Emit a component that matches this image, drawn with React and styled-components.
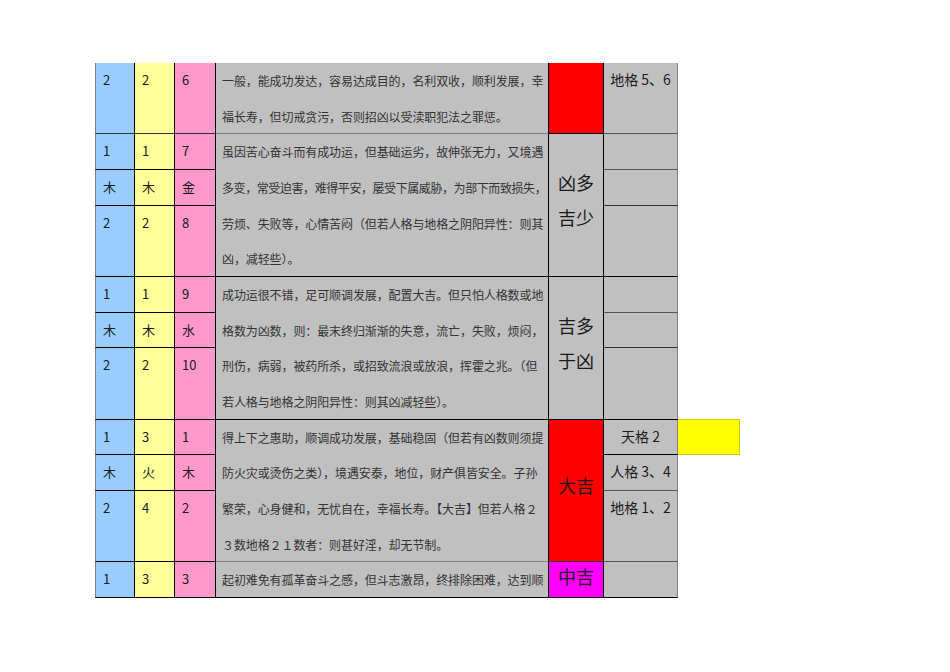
import styled, { createGlobalStyle } from "styled-components";

const GlobalStyle = createGlobalStyle`
  html, body {
    margin: 0;
    padding: 0;
    background: #fff;
  }
  body {
    font-family: "Noto Sans CJK SC", "Noto Sans", sans-serif;
  }
`;

const Page = styled.div`
  width: 950px;
  height: 672px;
  padding: 63px 0 0 95px;
  box-sizing: border-box;
`;

const Sheet = styled.div`
  display: grid;
  grid-template-columns: 40px 40px 41px 333px 55px 74px 62px;
  grid-template-rows: repeat(15, 35.67px);
`;

const Cell = styled.div`
  grid-column: ${(p) => p.$col};
  grid-row: ${(p) => p.$row} / span ${(p) => p.$span || 1};
  box-sizing: border-box;
  background: ${(p) => p.$bg || "#c0c0c0"};
  border-right: 1px solid ${(p) => p.$br || "#000"};
  border-bottom: 1px solid ${(p) => p.$bb || "#000"};
  border-left: ${(p) => (p.$first ? "1px solid #808080" : "none")};
  overflow: hidden;
`;

const Num = styled(Cell)`
  padding-left: 7px;
  font-size: 13px;
  line-height: 34px;
  color: #1a1a1a;
`;

const Desc = styled(Cell)`
  padding-left: 6px;
  font-size: 12px;
  line-height: 35.67px;
  color: #333;
  white-space: nowrap;
`;

const Line = styled.div`
  height: 35.67px;
  letter-spacing: ${(p) => (p.$tight ? "-0.42px" : "-0.1px")};
`;

const Verdict = styled(Cell)`
  display: flex;
  flex-direction: column;
  align-items: center;
  justify-content: ${(p) => (p.$top ? "flex-start" : "center")};
  padding-bottom: ${(p) => (p.$top ? "0" : "10px")};
  font-size: 18px;
  line-height: ${(p) => (p.$top ? "28px" : "35px")};
  color: #1a1a1a;
`;

const Label = styled(Cell)`
  text-align: center;
  font-size: 14px;
  line-height: 33px;
  color: #1a1a1a;
`;

const Marker = styled.div`
  grid-column: 7;
  grid-row: 11;
  box-sizing: border-box;
  background: #ffff00;
  border: 1px solid #cccc00;
  border-left: none;
  margin-top: -1px;
`;

const BLUE = "#99ccff";
const YELLOW = "#ffff99";
const PINK = "#ff99cc";

const numRows = [
  { row: 1, span: 2, vals: ["2", "2", "6"], bb: "#333" },
  { row: 3, vals: ["1", "1", "7"] },
  { row: 4, vals: ["木", "木", "金"] },
  { row: 5, span: 2, vals: ["2", "2", "8"] },
  { row: 7, vals: ["1", "1", "9"] },
  { row: 8, vals: ["木", "木", "水"] },
  { row: 9, span: 2, vals: ["2", "2", "10"] },
  { row: 11, vals: ["1", "3", "1"] },
  { row: 12, vals: ["木", "火", "木"] },
  { row: 13, span: 2, vals: ["2", "4", "2"] },
  { row: 15, vals: ["1", "3", "3"] },
];

const blocks = [
  {
    row: 1,
    span: 2,
    bb: "#808080",
    lines: [
      "一般，能成功发达，容易达成目的，名利双收，顺利发展，幸",
      "福长寿，但切戒贪污，否则招凶以受渎职犯法之罪惩。",
    ],
  },
  {
    row: 3,
    span: 4,
    lines: [
      "虽因苦心奋斗而有成功运，但基础运劣，故伸张无力，又境遇",
      "多变，常受迫害，难得平安，屡受下属威胁，为部下而致损失，",
      "劳烦、失败等，心情苦闷（但若人格与地格之阴阳异性：则其",
      "凶，减轻些）。",
    ],
  },
  {
    row: 7,
    span: 4,
    lines: [
      "成功运很不错，足可顺调发展，配置大吉。但只怕人格数或地",
      "格数为凶数，则：最末终归渐渐的失意，流亡，失败，烦闷，",
      "刑伤，病弱，被药所杀，或招致流浪或放浪，挥霍之兆。（但",
      "若人格与地格之阴阳异性：则其凶减轻些）。",
    ],
  },
  {
    row: 11,
    span: 4,
    bb: "#808080",
    lines: [
      "得上下之惠助，顺调成功发展，基础稳固（但若有凶数则须提",
      "防火灾或烫伤之类），境遇安泰，地位，财产俱皆安全。子孙",
      "繁荣，心身健和，无忧自在，幸福长寿。【大吉】但若人格２",
      "３数地格２１数者：则甚好淫，却无节制。",
    ],
  },
  {
    row: 15,
    span: 1,
    lines: ["起初难免有孤革奋斗之感，但斗志激昂，终排除困难，达到顺"],
  },
];

const verdicts = [
  { row: 1, span: 2, bg: "#ff0000", text: [] },
  { row: 3, span: 4, text: ["凶多", "吉少"] },
  { row: 7, span: 4, text: ["吉多", "于凶"] },
  { row: 11, span: 4, bg: "#ff0000", text: ["大吉"], bb: "#333" },
  { row: 15, span: 1, bg: "#ff00ff", text: ["中吉"], top: true },
];

const labels = [
  { row: 1, span: 2, text: "地格 5、6", bb: "#555" },
  { row: 3, text: "", bb: "#555" },
  { row: 4, text: "", bb: "#333" },
  { row: 5, span: 2, text: "" },
  { row: 7, text: "", bb: "#555" },
  { row: 8, text: "", bb: "#333" },
  { row: 9, span: 2, text: "" },
  { row: 11, text: "天格 2" },
  { row: 12, text: "人格 3、4", bb: "#555" },
  { row: 13, span: 2, text: "地格 1、2", bb: "#555" },
  { row: 15, text: "" },
];

function App() {
  const colours = [BLUE, YELLOW, PINK];

  return (
    <>
      <GlobalStyle />
      <Page>
        <Sheet>
          {numRows.map((r) =>
            r.vals.map((v, i) => (
              <Num
                key={`${r.row}-${i}`}
                $col={i + 1}
                $row={r.row}
                $span={r.span}
                $bg={colours[i]}
                $bb={r.bb}
                $first={i === 0}
              >
                {v}
              </Num>
            ))
          )}
          {blocks.map((b) => (
            <Desc key={b.row} $col={4} $row={b.row} $span={b.span} $bb={b.bb}>
              {b.lines.map((l, i) => (
                <Line key={i} $tight={[...l].length > 27}>
                  {l}
                </Line>
              ))}
            </Desc>
          ))}
          {verdicts.map((v) => (
            <Verdict
              key={v.row}
              $col={5}
              $row={v.row}
              $span={v.span}
              $bg={v.bg}
              $bb={v.bb}
              $top={v.top}
            >
              {v.text.map((t) => (
                <span key={t}>{t}</span>
              ))}
            </Verdict>
          ))}
          {labels.map((l) => (
            <Label
              key={l.row}
              $col={6}
              $row={l.row}
              $span={l.span}
              $bb={l.bb}
              $br="#808080"
            >
              {l.text}
            </Label>
          ))}
          <Marker />
        </Sheet>
      </Page>
    </>
  );
}

export default App;
